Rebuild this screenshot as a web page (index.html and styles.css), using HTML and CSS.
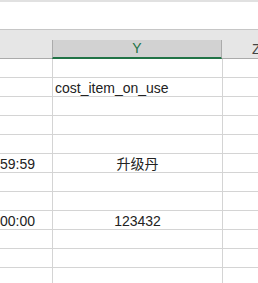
FILE: index.html
```html
<!DOCTYPE html>
<html>
<head>
  <title>Sheet</title>
  <link rel="stylesheet" href="styles.css">
</head>
<body>

<div class="topline"></div>
<div class="formula"></div>
<div class="band"></div>

<!-- column headers -->
<div class="colhead">
  <div class="hcell"></div>
  <div class="hcell selected">Y</div>
  <div class="hcell last">Z</div>
</div>

<!-- cells -->
<div class="grid">
  <div class="cell"></div><div class="cell"></div><div class="cell"></div>
  <div class="cell"></div><div class="cell text">cost_item_on_use</div><div class="cell"></div>
  <div class="cell"></div><div class="cell"></div><div class="cell"></div>
  <div class="cell"></div><div class="cell"></div><div class="cell"></div>
  <div class="cell"></div><div class="cell"></div><div class="cell"></div>
  <div class="cell num">59:59</div><div class="cell center">升级丹</div><div class="cell"></div>
  <div class="cell"></div><div class="cell"></div><div class="cell"></div>
  <div class="cell"></div><div class="cell"></div><div class="cell"></div>
  <div class="cell num">00:00</div><div class="cell center">123432</div><div class="cell"></div>
  <div class="cell"></div><div class="cell"></div><div class="cell"></div>
  <div class="cell"></div><div class="cell"></div><div class="cell"></div>
  <div class="cell"></div><div class="cell"></div><div class="cell"></div>
</div>

</body>
</html>
```

FILE: styles.css
```css
body {
  margin: 0;
  padding: 0;
  width: 258px;
  height: 283px;
  overflow: hidden;
  background: #fff;
  font-family: 'Liberation Sans', 'Noto Sans CJK SC', sans-serif;
  font-size: 14px;
  color: #222;
}

.topline {
  height: 2px;
  background: #e1e1e1;
}

.formula {
  height: 27px;
  background: #fff;
}

.band {
  height: 10px;
  background: #e6e6e6;
  border-top: 1px solid #c6c6c6;
}

.colhead {
  display: grid;
  grid-template-columns: 52px 170px 1fr;
  height: 19px;
  background: #e6e6e6;
}

.hcell {
  border-bottom: 1px solid #ababab;
  line-height: 18px;
  color: #444;
  text-align: center;
}

.hcell.selected {
  background: #d2d2d2;
  border-left: 1px solid #ababab;
  border-right: 1px solid #ababab;
  border-bottom: 2px solid #217346;
  color: #217346;
  line-height: 17px;
}

.hcell.last {
  text-align: left;
  padding-left: 30px;
}

.grid {
  display: grid;
  grid-template-columns: 52px 169px 1fr;
  grid-auto-rows: 18px;
  column-gap: 1px;
  row-gap: 1px;
  background: #d4d4d4;
}

.cell {
  background: #fff;
  line-height: 20px;
  white-space: nowrap;
  overflow: hidden;
}

.text {
  padding-left: 2px;
}

.num {
  text-align: right;
  padding-right: 17px;
}

.center {
  text-align: center;
}
```
